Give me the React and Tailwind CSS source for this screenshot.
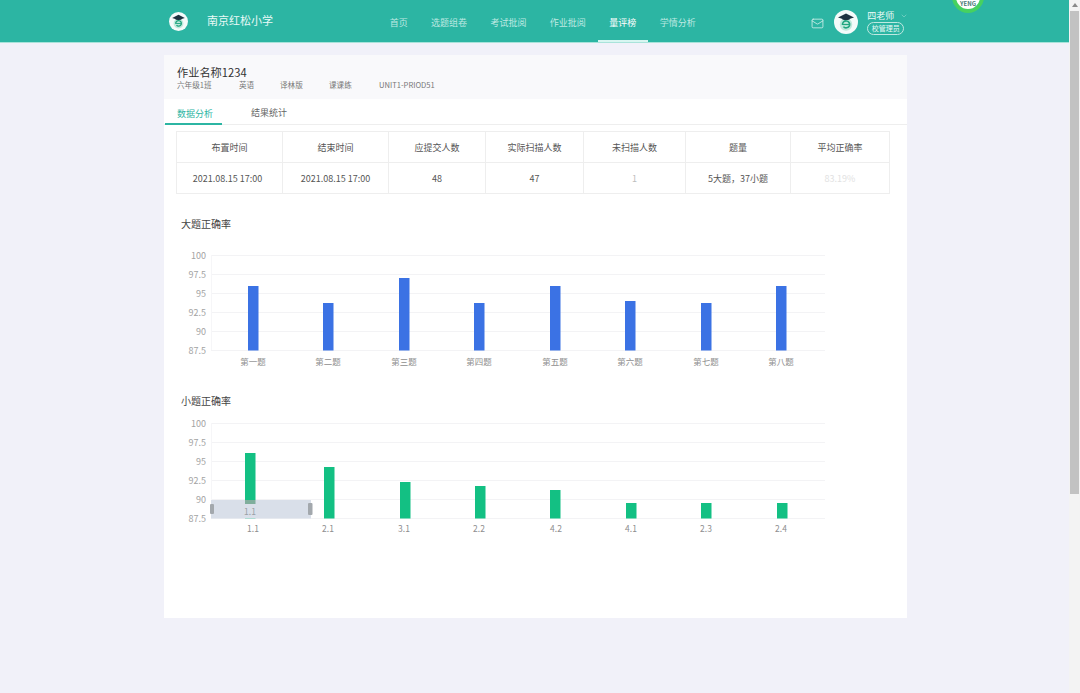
import React from "react";
import { Mail, ChevronDown } from "lucide-react";

const font = { fontFamily: '"Noto Sans CJK SC", "Noto Sans", sans-serif' };

function Logo({ size }) {
  return (
    <svg width={size} height={size} viewBox="0 0 24 24" className="shrink-0">
      <circle cx="12" cy="12" r="12" fill="#f4fbfa" />
      <circle cx="12" cy="14.5" r="6.2" fill="#bfe9dc" />
      <path d="M8.5 15a3.6 3.6 0 1 1 7 .6c-1 2.6-4.6 3-6 1" fill="none" stroke="#1fa57f" strokeWidth="1.6" />
      <path d="M9 14.5h6" stroke="#1fa57f" strokeWidth="1.2" />
      <path d="M12 3.5 20 7.5 12 10 4 7.5Z" fill="#1d3340" />
      <path d="M7.5 8.5c1 2 8 2 9 0" fill="#1d3340" />
    </svg>
  );
}

const navItems = ["首页", "选题组卷", "考试批阅", "作业批阅", "量评榜", "学情分析"];
const headers = ["布置时间", "结束时间", "应提交人数", "实际扫描人数", "未扫描人数", "题量", "平均正确率"];
const values = ["2021.08.15 17:00", "2021.08.15 17:00", "48", "47", "1", "5大题，37小题", "83.19%"];
const colWidths = ["w-[106px]", "w-[106px]", "w-[97px]", "w-[98px]", "w-[102px]", "w-[105px]", "w-[99px]"];
const metas = [
  ["六年级1班", "w-[62px]"],
  ["英语", "w-[41px]"],
  ["译林版", "w-[49px]"],
  ["课课练", "w-[50px]"],
  ["UNIT1-PRIOD51", "w-[70px]"],
];

function Chart({ ys, bars, color, labels, centers, labelCenters, labelDy, height, children }) {
  const base = ys[ys.length - 1];
  const ticks = ["100", "97.5", "95", "92.5", "90", "87.5"];
  return (
    <svg width="660" height={height} viewBox={`0 0 660 ${height}`} className="block">
      {ys.map((y) => (
        <line key={y} x1="34" x2="648" y1={y + 0.5} y2={y + 0.5} stroke="#f3f3f5" strokeWidth="1" />
      ))}
      <line x1="34.5" x2="34.5" y1={ys[0]} y2={base} stroke="#f6f6f8" strokeWidth="1" />
      {ys.map((y, i) => (
        <text key={i} x="29" y={y + 3.5} textAnchor="end" fontSize="9" fill="#a3a3a3" style={font}>
          {ticks[i]}
        </text>
      ))}
      {bars.map((top, i) => (
        <rect key={i} x={centers[i] - 5} y={top} width="10.5" height={base - top + 0.5} fill={color} />
      ))}
      {children}
      {labels.map((l, i) => (
        <text key={i} x={labelCenters[i]} y={base + labelDy} textAnchor="middle" fontSize="8.5" fill="#8e8e8e" style={font}>
          {l}
        </text>
      ))}
    </svg>
  );
}

export default function App() {
  return (
    <div className="relative flex h-[693px] w-[1080px] overflow-hidden bg-[#f1f1f9]" style={font}>
      <div className="flex min-w-0 flex-1 flex-col">
        <header className="flex h-[43px] shrink-0 items-center border-b border-[#a9e3da] bg-[#2cb5a3] pl-[169px]">
          <Logo size={19} />
          <div className="ml-[19px] mb-[2px] w-[66px] whitespace-nowrap text-[11px] leading-none text-[#eafaf7]">南京红松小学</div>
          <nav className="ml-[105px] flex h-full items-stretch">
            {navItems.map((n) => (
              <div
                key={n}
                className={
                  n === "量评榜"
                    ? "flex items-center whitespace-nowrap border-b-2 border-[#d7f6f1] px-[11.7px] pt-[6px] text-[9px] text-white"
                    : "flex items-center whitespace-nowrap border-b-2 border-transparent px-[11.7px] pt-[6px] text-[9px] text-[#bfe9e2]"
                }
              >
                {n}
              </div>
            ))}
          </nav>
          <Mail className="ml-[103px] mt-[4px] h-[13px] w-[15px] text-[#dff5f1]" strokeWidth={1.4} />
          <div className="ml-[9px] mt-[2px]">
            <Logo size={24} />
          </div>
          <div className="ml-[9px] flex w-[46px] flex-col items-start pt-[3px]">
            <div className="flex items-center text-[9px] leading-[12px] text-[#eafaf7]">
              四老师
              <ChevronDown className="ml-[6px] h-[8px] w-[8px] text-[#a8e2d9]" strokeWidth={1.5} />
            </div>
            <div className="flex h-[13px] w-[37px] items-center justify-center rounded-full border border-[#bfe9e2] text-[7px] leading-none text-[#eafaf7]">
              校管理员
            </div>
          </div>
        </header>

        <main className="pl-[164px] pt-[12px]">
          <section className="flex h-[563px] w-[743px] flex-col bg-white">
            <div className="h-[44px] bg-[#f9f9fb] pl-[13px] pt-[9px]">
              <div className="text-[11.2px] leading-[16px] text-[#333333]">作业名称1234</div>
              <div className="-mt-px flex text-[7.6px] leading-[12px] text-[#777777]">
                {metas.map(([m, w]) => (
                  <span key={m} className={`${w} whitespace-nowrap`}>
                    {m}
                  </span>
                ))}
              </div>
            </div>

            <div className="flex h-[26px] border-b border-[#eeeeee] pl-[1px] text-[9px]">
              <div className="-mb-px flex w-[57px] items-center justify-center border-b-2 border-[#2cb5a3] pl-[3px] pt-[5px] text-[#2cb5a3]">数据分析</div>
              <div className="ml-[29px] flex items-center pt-[2px] text-[#666666]">结果统计</div>
            </div>

            <div className="pl-[12px] pt-[6px]">
              <table className="w-[713px] table-fixed border-collapse text-center text-[9px] text-[#555555]">
                <colgroup>
                  {colWidths.map((c, i) => (
                    <col key={i} className={c} />
                  ))}
                </colgroup>
                <tbody>
                  <tr className="h-[31px]">
                    {headers.map((h) => (
                      <td key={h} className="border border-[#eeeeee] p-0 pt-[2px]">
                        {h}
                      </td>
                    ))}
                  </tr>
                  <tr className="h-[31px]">
                    {values.map((v, i) => (
                      <td
                        key={i}
                        className={
                          i === 6
                            ? "border border-[#eeeeee] p-0 pt-[2px] text-[#e2e2e2]"
                            : i === 4
                              ? "border border-[#eeeeee] p-0 pt-[2px] text-[#bdbdbd]"
                              : i === 0
                                ? "border border-[#eeeeee] p-0 pt-[2px] pr-[4px]"
                                : "border border-[#eeeeee] p-0 pt-[2px]"
                        }
                      >
                        {v}
                      </td>
                    ))}
                  </tr>
                </tbody>
              </table>
            </div>

            <div className="pl-[17px] pt-[23px] text-[10px] leading-[14px] text-[#444444]">大题正确率</div>
            <div className="mt-[17px] pl-[13px]">
              <Chart
                height={130}
                color="#3b72e4"
                ys={[7, 26, 45, 64, 83, 102]}
                centers={[76, 151, 227, 302, 378, 453, 529, 604]}
                labelCenters={[76, 151, 227, 302, 378, 453, 529, 604]}
                labelDy={15}
                bars={[38, 55, 30, 55, 38, 53, 55, 38]}
                labels={["第一题", "第二题", "第三题", "第四题", "第五题", "第六题", "第七题", "第八题"]}
              />
            </div>

            <div className="mt-[16px] pl-[17px] text-[10px] leading-[14px] text-[#444444]">小题正确率</div>
            <div className="mt-[9px] pl-[13px]">
              <Chart
                height={130}
                color="#13c083"
                ys={[6, 25, 44, 63, 82, 101]}
                centers={[73, 152, 228, 303, 378, 454, 529, 605]}
                labelCenters={[76, 151, 227, 302, 379, 454, 529, 604]}
                labelDy={14}
                bars={[36, 50, 65, 69, 73, 86, 86, 86]}
                labels={["1.1", "2.1", "3.1", "2.2", "4.2", "4.1", "2.3", "2.4"]}
              >
                <rect x="34" y="83" width="100" height="18.5" fill="#d9dfe9" />
                <rect x="68" y="83" width="10.5" height="4" fill="#7fae9c" />
                <rect x="33" y="87" width="4" height="10" rx="1" fill="#a3a8ad" />
                <rect x="131" y="86" width="4.5" height="12" rx="1" fill="#a3a8ad" />
                <text x="73" y="98" textAnchor="middle" fontSize="8.5" fill="#9a9fa6" style={font}>
                  1.1
                </text>
              </Chart>
            </div>
          </section>
        </main>
      </div>

      <aside className="flex w-[11px] shrink-0 flex-col items-center bg-[#f3f3f3]">
        <div className="mt-[3px] h-0 w-0 border-x-[3px] border-b-[4px] border-x-transparent border-b-[#8a8a8a]" />
        <div className="mt-[4px] h-[483px] w-[9px] bg-[#c2c2c2]" />
      </aside>

      <div className="absolute left-[952px] top-[-19px] flex h-[32px] w-[32px] items-end justify-center rounded-full border-[4px] border-[#46d160] bg-white pb-[1px] text-[6px] font-bold leading-[8px] text-[#4a7a78]">
        YENG
      </div>
    </div>
  );
}
